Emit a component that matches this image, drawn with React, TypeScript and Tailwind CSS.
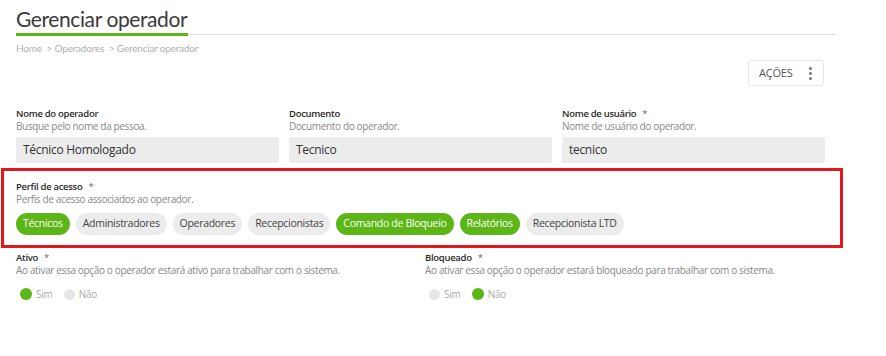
import React from "react";

const chips: { label: string; on: boolean }[] = [
  { label: "Técnicos", on: true },
  { label: "Administradores", on: false },
  { label: "Operadores", on: false },
  { label: "Recepcionistas", on: false },
  { label: "Comando de Bloqueio", on: true },
  { label: "Relatórios", on: true },
  { label: "Recepcionista LTD", on: false },
];

function Label({ text, required }: { text: string; required?: boolean }) {
  return (
    <div className="text-[9.5px] leading-[13px] font-semibold tracking-[-0.3px] text-[#2a2a2a]">
      {text}
      {required && <span className="font-normal text-[#666] ml-[6px]">*</span>}
    </div>
  );
}

function Desc({ text }: { text: string }) {
  return <div className="text-[10px] leading-[13px] tracking-[-0.35px] text-[#888]">{text}</div>;
}

function Field({ label, desc, value, required }: { label: string; desc: string; value: string; required?: boolean }) {
  return (
    <div className="w-[263px] flex flex-col">
      <Label text={label} required={required} />
      <Desc text={desc} />
      <div className="mt-[4px] h-[26px] rounded-[2px] bg-[#ececec] flex items-center px-[7px] text-[12px] tracking-[-0.3px] text-[#333]">
        {value}
      </div>
    </div>
  );
}

function Radio({ on, label }: { on: boolean; label: string }) {
  return (
    <div className="flex items-center gap-[4px]">
      <span className={on ? "w-[12px] h-[12px] rounded-full bg-[#5cb615]" : "w-[11px] h-[11px] rounded-full bg-[#e6e6e6]"} />
      <span className="text-[10px] leading-[12px] tracking-[-0.2px] text-[#aaa]">{label}</span>
    </div>
  );
}

function Toggle({ label, desc, yes }: { label: string; desc: string; yes: boolean }) {
  return (
    <div className="w-[409px] flex flex-col">
      <Label text={label} required />
      <Desc text={desc} />
      <div className="mt-[11px] ml-[4px] flex items-center gap-[11px]">
        <Radio on={yes} label="Sim" />
        <Radio on={!yes} label="Não" />
      </div>
    </div>
  );
}

export default function App() {
  return (
    <div className="w-[886px] h-[356px] bg-white font-['Open_Sans',sans-serif] overflow-hidden">
      <div className="pl-4 pt-[6px]">
        <h1 className="text-[21px] leading-[25px] tracking-[-0.4px] text-[#3a3a3a] font-['Lato',sans-serif] font-normal">
          Gerenciar operador
        </h1>
        <div className="mt-[2px] w-[819px] flex items-center">
          <div className="w-[172px] h-[3px] bg-[#5cb615]" />
          <div className="flex-1 h-px bg-[#dddddd]" />
        </div>
        <div className="mt-[5px] text-[10px] leading-[14px] tracking-[-0.2px] text-[#b0b0b0] font-['Lato',sans-serif]">
          Home &nbsp;&gt; Operadores &nbsp;&gt; Gerenciar operador
        </div>
        <div className="mt-[5px] ml-[732px] w-[76px] h-[26px] border border-[#e6e6e6] rounded-[3px] flex items-center justify-between pl-[10px] pr-[11px]">
          <span className="text-[11px] tracking-[-0.2px] text-[#555]">AÇÕES</span>
          <span className="flex flex-col gap-[2px]">
            <span className="w-[3px] h-[3px] rounded-full bg-[#777]" />
            <span className="w-[3px] h-[3px] rounded-full bg-[#777]" />
            <span className="w-[3px] h-[3px] rounded-full bg-[#777]" />
          </span>
        </div>
        <div className="mt-[21px] flex gap-[10px]">
          <Field label="Nome do operador" desc="Busque pelo nome da pessoa." value="Técnico Homologado" />
          <Field label="Documento" desc="Documento do operador." value="Tecnico" />
          <Field label="Nome de usuário" desc="Nome de usuário do operador." value="tecnico" required />
        </div>
      </div>
      <div className="mt-[5px] ml-[1px] w-[842px] h-[80px] border-[3px] border-[#e3171e] pl-[12px] pt-[9px]">
        <Label text="Perfil de acesso" required />
        <Desc text="Perfis de acesso associados ao operador." />
        <div className="mt-[7px] flex gap-[6px]">
          {chips.map((c) => (
            <span
              key={c.label}
              className={
                c.on
                  ? "h-[22px] px-[7px] rounded-full bg-[#5cb615] text-white text-[10.5px] tracking-[-0.3px] flex items-center"
                  : "h-[22px] px-[7px] rounded-full bg-[#ececec] text-[#444] text-[10.5px] tracking-[-0.3px] flex items-center"
              }
            >
              {c.label}
            </span>
          ))}
        </div>
      </div>
      <div className="pl-4 mt-[3px] flex">
        <Toggle label="Ativo" desc="Ao ativar essa opção o operador estará ativo para trabalhar com o sistema." yes={true} />
        <Toggle label="Bloqueado" desc="Ao ativar essa opção o operador estará bloqueado para trabalhar com o sistema." yes={false} />
      </div>
    </div>
  );
}
